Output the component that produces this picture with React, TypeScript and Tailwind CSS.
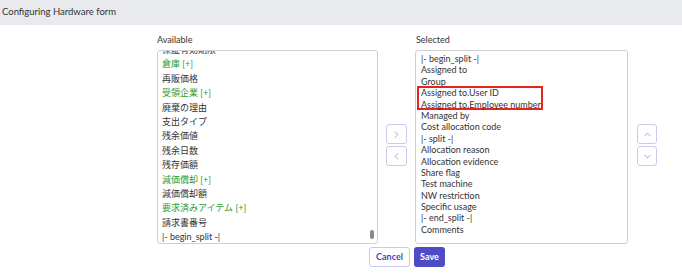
import { ChevronDown, ChevronLeft, ChevronRight, ChevronUp } from 'lucide-react';

const available = [
  { label: '保証有効期限' },
  { label: '倉庫 [+]', group: true },
  { label: '再販価格' },
  { label: '受領企業 [+]', group: true },
  { label: '廃棄の理由' },
  { label: '支出タイプ' },
  { label: '残余価値' },
  { label: '残余日数' },
  { label: '残存価額' },
  { label: '減価償却 [+]', group: true },
  { label: '減価償却額' },
  { label: '要求済みアイテム [+]', group: true },
  { label: '請求書番号' },
  { label: '|- begin_split -|' }
];

const selected = [
  '|- begin_split -|',
  'Assigned to',
  'Group',
  'Assigned to.User ID',
  'Assigned to.Employee number',
  'Managed by',
  'Cost allocation code',
  '|- split -|',
  'Allocation reason',
  'Allocation evidence',
  'Share flag',
  'Test machine',
  'NW restriction',
  'Specific usage',
  '|- end_split -|',
  'Comments'
];

function IconButton({ children }: { children: React.ReactNode }) {
  return (
    <button className="flex h-[20px] w-full items-center justify-center rounded-[3px] border border-[#c9c9f0] bg-white text-[#5b5bd6]">
      {children}
    </button>
  );
}

export default function App() {
  return (
    <div className="h-[276px] w-[682px] overflow-hidden bg-white font-['Lato','Noto_Sans_CJK_JP',sans-serif] text-[#333]">
      <div className="flex h-[25px] items-center bg-[#e9eaee] pl-[2px] text-[9.5px]">
        Configuring Hardware form
      </div>

      <div className="ml-[157px] w-[500px] pt-[9px]">
        <div className="flex">
          <div className="w-[221px]">
            <div className="h-[16px] text-[9px] leading-[12px]">Available</div>
            <div className="relative h-[194px] overflow-hidden rounded-[3px] border border-[#cfcfd4] pl-[4px]">
              <div className="-mt-[8px] text-[9px]">
                {available.map((item) => (
                  <div
                    key={item.label}
                    className={`h-[14.4px] leading-[14.4px] ${item.group ? 'text-[#2f9a2f]' : ''}`}
                  >
                    {item.label}
                  </div>
                ))}
              </div>
              <span className="absolute bottom-[4px] right-[3px] h-[9px] w-[4px] rounded-full bg-[#8a8a8a]" />
            </div>
          </div>

          <div className="ml-[8px] flex w-[21px] flex-col gap-[2px] pt-[90px]">
            <IconButton>
              <ChevronRight size={11} strokeWidth={1.25} />
            </IconButton>
            <IconButton>
              <ChevronLeft size={11} strokeWidth={1.25} />
            </IconButton>
          </div>

          <div className="ml-[8px] w-[213px]">
            <div className="h-[16px] pl-px text-[9px] leading-[12px]">Selected</div>
            <div className="h-[194px] overflow-hidden rounded-[3px] border border-[#cfcfd4] pl-[5px] pt-[2px] text-[9px]">
              {selected.map((label, i) => (
                <div key={label} className="relative h-[11.4px] whitespace-nowrap leading-[11.4px]">
                  {label}
                  {i === 3 && (
                    <span className="absolute left-[-4px] top-[-1px] h-[24px] w-[126px] border-2 border-[#e3261c]" />
                  )}
                </div>
              ))}
            </div>
          </div>

          <div className="ml-[9px] flex w-[20px] flex-col gap-[2px] pt-[90px]">
            <IconButton>
              <ChevronUp size={11} strokeWidth={1.25} />
            </IconButton>
            <IconButton>
              <ChevronDown size={11} strokeWidth={1.25} />
            </IconButton>
          </div>
        </div>

        <div className="mt-[3px] flex justify-center gap-[4px]">
          <button className="h-[20px] w-[41px] rounded-[3px] border border-[#c9c9f0] bg-white text-[9px] font-bold text-[#4a44c2]">
            Cancel
          </button>
          <button className="h-[20px] w-[31px] rounded-[3px] bg-[#4f4bc6] text-[9px] font-bold text-white">
            Save
          </button>
        </div>
      </div>
    </div>
  );
}
